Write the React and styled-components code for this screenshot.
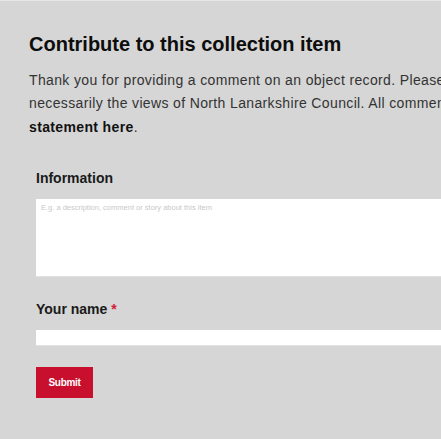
import React from 'react';
import styled, { createGlobalStyle } from 'styled-components';

const GlobalStyle = createGlobalStyle`
  html, body {
    margin: 0;
    padding: 0;
    background: #d6d6d6;
    overflow: hidden;
  }
  body {
    font-family: "Liberation Sans", Arial, sans-serif;
    color: #1a1a1a;
  }
`;

const Section = styled.section`
  width: 760px;
  min-height: 439px;
  box-sizing: border-box;
  background: #d6d6d6;
  border-top: 1px solid #e6e6e6;
  padding: 31px 0 0 29px;
`;

const Heading = styled.h2`
  margin: 0;
  font-size: 20px;
  line-height: 24px;
  font-weight: 700;
  color: #0d0d0d;
`;

const Intro = styled.p`
  margin: 12.5px 0 0;
  font-size: 14px;
  line-height: 23.5px;
  letter-spacing: 0.36px;
  color: #333;
  white-space: nowrap;

  a {
    color: #111;
    font-weight: 700;
    text-decoration: none;
  }
`;

const Form = styled.form`
  display: flex;
  flex-direction: column;
  padding: 31px 0 0 7px;
`;

const Field = styled.div`
  display: flex;
  flex-direction: column;
  margin-bottom: ${p => p.$gap || 20}px;
`;

const Label = styled.label`
  font-size: 14px;
  line-height: 16px;
  font-weight: 700;
  color: #1a1a1a;
  margin-bottom: ${p => p.$gap || 13}px;
`;

const Required = styled.span`
  color: #d2203a;
`;

const TextArea = styled.textarea`
  display: block;
  width: 700px;
  height: 78px;
  box-sizing: border-box;
  border: none;
  border-bottom: 1px solid #e2e2e2;
  background: #fff;
  padding: 4px 5px;
  resize: none;
  font-family: "Liberation Sans", Arial, sans-serif;
  font-size: 7.5px;
  color: #333;
  outline: none;

  &::placeholder {
    color: #c9c9c9;
  }
`;

const Input = styled.input`
  display: block;
  width: 700px;
  height: 16px;
  box-sizing: border-box;
  border: none;
  border-bottom: 1px solid #e2e2e2;
  background: #fff;
  padding: 0 5px;
  outline: none;
`;

const SubmitButton = styled.button`
  align-self: flex-start;
  width: 57px;
  height: 31px;
  border: none;
  background: #c8102e;
  color: #fff;
  font-family: "Liberation Sans", Arial, sans-serif;
  font-size: 10px;
  font-weight: 700;
  letter-spacing: -0.3px;
  padding: 0;
  cursor: pointer;
`;

export default function App() {
  return (
    <>
      <GlobalStyle />
      <Section>
        <Heading>Contribute to this collection item</Heading>
        <Intro>
          Thank you for providing a comment on an object record. Please note that comments are moderated and reflect the views of the contributor and not
          <br />
          necessarily the views of North Lanarkshire Council. All comments are subject to our terms and conditions. You can read our privacy
          <br />
          <a href="#privacy">statement here</a>.
        </Intro>
        <Form onSubmit={e => e.preventDefault()}>
          <Field $gap={24}>
            <Label htmlFor="info" $gap={12.5}>Information</Label>
            <TextArea id="info" placeholder="E.g. a description, comment or story about this item" />
          </Field>
          <Field $gap={21}>
            <Label htmlFor="name">
              Your name <Required>*</Required>
            </Label>
            <Input id="name" type="text" />
          </Field>
          <SubmitButton type="submit">Submit</SubmitButton>
        </Form>
      </Section>
    </>
  );
}
